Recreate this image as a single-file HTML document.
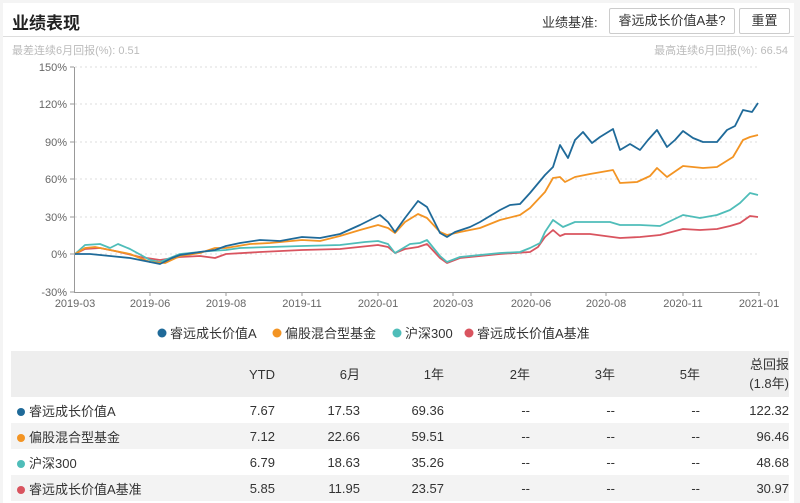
<!DOCTYPE html>
<html><head><meta charset="utf-8"><style>
*{margin:0;padding:0;box-sizing:border-box}
body{width:800px;height:503px;background:#f4f4f4;font-family:"Liberation Sans","Noto Sans CJK SC",sans-serif;position:relative;overflow:hidden;color:#333}
.panel{position:absolute;left:3px;top:3px;width:791px;height:500px;background:#fff}
.abs{position:absolute;white-space:nowrap}
.title{left:12px;top:9px;font-size:17px;font-weight:bold;color:#222}
.hl{position:absolute;left:3px;top:36px;width:791px;height:1px;background:#ddd}
.box{position:absolute;border:1px solid #ccc;background:#fff;font-size:13px;color:#333;text-align:center;line-height:24px;border-radius:2px}
.sub{font-size:11px;color:#bbb;top:42px}
table{position:absolute;left:11px;top:351px;width:778px;border-collapse:collapse;font-size:13px;color:#333}
td{height:26px;text-align:right;padding:0}
tr.h td{height:46px;background:#eee;line-height:19px}
tr.g td{background:#f3f3f3}
td.n{text-align:left;padding-left:6px}
.dot{display:inline-block;width:8px;height:8px;border-radius:50%;margin-right:4px;vertical-align:0}
</style></head><body>
<div class="panel"></div>
<div class="abs title">业绩表现</div>
<div class="abs" style="left:542px;top:12px;font-size:13px;color:#333">业绩基准:</div>
<div class="box" style="left:609px;top:8px;width:126px;height:26px">睿远成长价值A基?</div>
<div class="box" style="left:739px;top:8px;width:51px;height:26px">重置</div>
<div class="hl"></div>
<div class="abs sub" style="left:12px">最差连续6月回报(%): 0.51</div>
<div class="abs sub" style="right:12px">最高连续6月回报(%): 66.54</div>
<svg class="abs" style="left:0;top:0" width="800" height="350" font-family="Liberation Sans" font-size="11" fill="#666">
<g stroke="#ddd" stroke-dasharray="2,3">
<line x1="75" x2="760" y1="67" y2="67"/><line x1="75" x2="760" y1="104" y2="104"/><line x1="75" x2="760" y1="142" y2="142"/><line x1="75" x2="760" y1="179" y2="179"/><line x1="75" x2="760" y1="217" y2="217"/><line x1="75" x2="760" y1="254" y2="254"/>
</g>
<g stroke="#999"><line x1="74.5" x2="74.5" y1="67" y2="293"/><line x1="74" x2="760" y1="292.5" y2="292.5"/>
<line x1="70" x2="74" y1="67" y2="67"/><line x1="70" x2="74" y1="104" y2="104"/><line x1="70" x2="74" y1="142" y2="142"/><line x1="70" x2="74" y1="179" y2="179"/><line x1="70" x2="74" y1="217" y2="217"/><line x1="70" x2="74" y1="254" y2="254"/><line x1="70" x2="74" y1="292" y2="292"/>
<line x1="150" x2="150" y1="292" y2="296"/><line x1="226" x2="226" y1="292" y2="296"/><line x1="302" x2="302" y1="292" y2="296"/><line x1="378" x2="378" y1="292" y2="296"/><line x1="453" x2="453" y1="292" y2="296"/><line x1="531" x2="531" y1="292" y2="296"/><line x1="606" x2="606" y1="292" y2="296"/><line x1="683" x2="683" y1="292" y2="296"/><line x1="759" x2="759" y1="292" y2="296"/></g>
<g text-anchor="end"><text x="67" y="71">150%</text><text x="67" y="108">120%</text><text x="67" y="146">90%</text><text x="67" y="183">60%</text><text x="67" y="221">30%</text><text x="67" y="258">0%</text><text x="67" y="296">-30%</text></g>
<g text-anchor="middle"><text x="75" y="307">2019-03</text><text x="150" y="307">2019-06</text><text x="226" y="307">2019-08</text><text x="302" y="307">2019-11</text><text x="378" y="307">2020-01</text><text x="453" y="307">2020-03</text><text x="531" y="307">2020-06</text><text x="606" y="307">2020-08</text><text x="683" y="307">2020-11</text><text x="759" y="307">2021-01</text></g>
<g fill="none" stroke-width="1.8" stroke-linejoin="round">
<polyline stroke="#d9545f" points="75,254 85,249 100,248 115,251 140,257 160,260 180,257 200,256 215,258 226,254 260,252 302,250 340,249 378,245 388,247 395,253 405,249 418,247 427,244 440,258 447,263 460,258 500,254 530,252 538,247 545,237 553,230 560,236 565,234 590,234 620,238 640,237 660,235 683,229 700,230 717,229 730,226 740,223 750,216 758,217"/>
<polyline stroke="#4fbdb9" points="75,254 85,245 100,244 110,248 118,244 130,249 150,260 160,262 180,254 200,252 210,251 226,250 240,248 270,247 302,246 340,245 365,242 378,241 388,244 395,253 410,244 420,243 427,240 440,256 447,262 460,257 500,253 520,252 530,248 540,243 545,232 553,220 563,227 575,222 590,222 610,222 620,225 640,225 660,226 683,215 700,218 717,215 730,210 740,203 750,193 758,195"/>
<polyline stroke="#f39423" points="75,254 85,248 95,247 110,250 130,254 150,262 165,263 180,256 200,253 215,248 226,248 250,244 270,243 302,240 320,241 340,236 360,230 378,225 388,228 395,233 405,222 418,214 427,218 440,232 447,235 460,232 480,228 500,220 520,215 530,208 545,192 553,178 560,177 565,182 575,177 590,174 613,170 620,183 637,182 650,176 657,168 667,177 683,166 703,168 717,167 733,157 743,140 750,137 758,135"/>
<polyline stroke="#1f6a99" points="75,254 90,254 110,256 130,258 150,262 160,264 172,258 180,255 200,252 215,250 226,246 240,243 260,240 280,241 302,237 320,238 340,234 360,225 380,215 388,222 395,232 405,218 418,201 427,207 440,233 447,237 455,232 470,227 480,222 490,216 500,210 510,205 520,204 530,193 545,175 553,167 560,145 568,158 575,140 583,132 592,143 600,137 613,129 620,150 630,144 640,150 648,140 657,130 667,147 675,140 683,131 693,138 703,142 717,142 727,130 735,126 743,110 752,112 758,103"/>
</g>
<g font-size="13" fill="#333">
<circle cx="162" cy="333" r="4.5" fill="#1f6a99"/><text x="170" y="338">睿远成长价值A</text>
<circle cx="277" cy="333" r="4.5" fill="#f39423"/><text x="285" y="338">偏股混合型基金</text>
<circle cx="397" cy="333" r="4.5" fill="#4fbdb9"/><text x="405" y="338">沪深300</text>
<circle cx="469" cy="333" r="4.5" fill="#d9545f"/><text x="477" y="338">睿远成长价值A基准</text>
</g>
</svg>
<table>
<colgroup><col style="width:160px"><col style="width:104px"><col style="width:85px"><col style="width:84px"><col style="width:86px"><col style="width:85px"><col style="width:85px"><col style="width:89px"></colgroup>
<tr class="h"><td></td><td>YTD</td><td>6月</td><td>1年</td><td>2年</td><td>3年</td><td>5年</td><td>总回报<br>(1.8年)</td></tr>
<tr><td class="n"><span class="dot" style="background:#1f6a99"></span>睿远成长价值A</td><td>7.67</td><td>17.53</td><td>69.36</td><td>--</td><td>--</td><td>--</td><td>122.32</td></tr>
<tr class="g"><td class="n"><span class="dot" style="background:#f39423"></span>偏股混合型基金</td><td>7.12</td><td>22.66</td><td>59.51</td><td>--</td><td>--</td><td>--</td><td>96.46</td></tr>
<tr><td class="n"><span class="dot" style="background:#4fbdb9"></span>沪深300</td><td>6.79</td><td>18.63</td><td>35.26</td><td>--</td><td>--</td><td>--</td><td>48.68</td></tr>
<tr class="g"><td class="n"><span class="dot" style="background:#d9545f"></span>睿远成长价值A基准</td><td>5.85</td><td>11.95</td><td>23.57</td><td>--</td><td>--</td><td>--</td><td>30.97</td></tr>
</table>
</body></html>
